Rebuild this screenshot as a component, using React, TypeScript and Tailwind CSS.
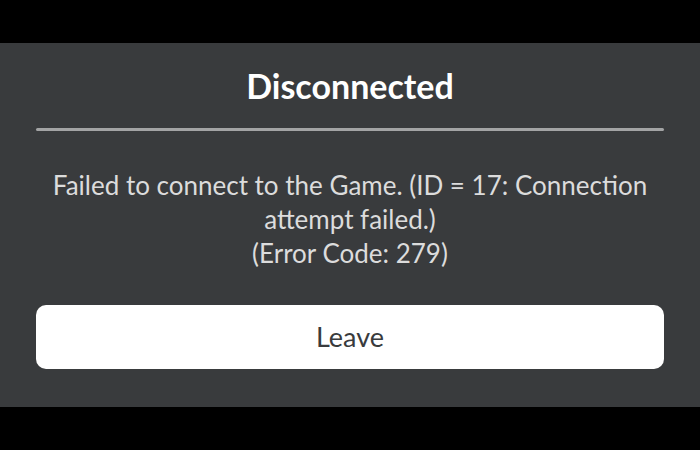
export default function App() {
  return (
    <div className="h-[450px] w-[700px] bg-black flex flex-col font-['Lato','Noto_Sans',sans-serif]">
      {/* letterbox top */}
      <div className="h-[43px] shrink-0" />

      {/* Dialog */}
      <div className="h-[364px] shrink-0 bg-[#393b3d] px-[36px] flex flex-col">
        <h1 className="mt-[25px] text-center text-[34px] leading-[36px] font-bold text-white">Disconnected</h1>
        <div className="mt-[24px] h-[3px] bg-[#a3a4a5] rounded-full" />
        <p className="mt-[37px] text-center text-[26px] leading-[34px] text-[#dcdcdc]">
          Failed to connect to the Game. (ID = 17: Connection attempt failed.)
          <br />
          (Error Code: 279)
        </p>
        <button className="mt-[35px] h-[64px] w-full rounded-[10px] bg-white text-[27px] text-[#393b3d]">
          Leave
        </button>
      </div>
    </div>
  )
}
